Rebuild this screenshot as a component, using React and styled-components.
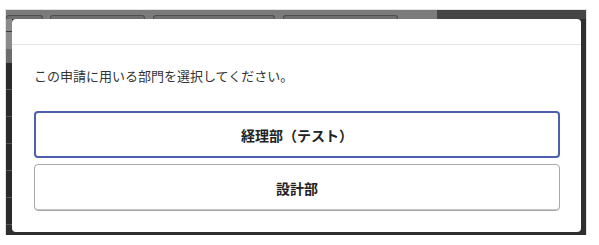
import React from 'react'
import styled, { createGlobalStyle } from 'styled-components'

const GlobalStyle = createGlobalStyle`
  html, body {
    margin: 0;
    padding: 0;
    background: #ffffff;
  }
  body {
    font-family: "Noto Sans CJK JP", "Noto Sans", sans-serif;
  }
`

const departments = [
  { id: 'acc', name: '経理部（テスト）', focused: true },
  { id: 'des', name: '設計部', focused: false },
]

const tabs = [
  { id: 1, width: 37, gap: 0 },
  { id: 2, width: 95, gap: 7 },
  { id: 3, width: 122, gap: 8 },
  { id: 4, width: 115, gap: 8 },
]

const App = () => {
  return (
    <>
      <GlobalStyle />
      <Frame>
        <PageBehind>
          <TopBar>
            <TabStrip>
              {tabs.map((t) => (
                <Tab key={t.id} $width={t.width} $gap={t.gap} />
              ))}
            </TabStrip>
            <TopBarRight />
          </TopBar>
          <PageBody>
            <SideStrip>
              <SideHead />
              {[0, 1, 2, 3, 4, 5].map((i) => (
                <SideRow key={i} />
              ))}
            </SideStrip>
          </PageBody>
        </PageBehind>

        <Modal>
          <ModalHeader />
          <ModalBody>
            <Prompt>この申請に用いる部門を選択してください。</Prompt>
            <ChoiceList>
              {departments.map((d) => (
                <ChoiceButton key={d.id} $focused={d.focused}>
                  {d.name}
                </ChoiceButton>
              ))}
            </ChoiceList>
          </ModalBody>
        </Modal>
      </Frame>
    </>
  )
}

export default App

const Frame = styled.div`
  position: relative;
  margin: 10px 0 0 6px;
  width: 580px;
  height: 225px;
  background: #2f2f2f;
  overflow: hidden;
  box-shadow: 0 0 0 1px #e2e2e2;
`

const PageBehind = styled.div`
  display: flex;
  flex-direction: column;
  height: 100%;
`

const TopBar = styled.div`
  display: flex;
  height: 9px;
`

const TabStrip = styled.div`
  flex: 1;
  display: flex;
  align-items: flex-end;
  background: #7b7b7b;
`

const Tab = styled.div`
  box-sizing: border-box;
  width: ${(p) => p.$width}px;
  margin-left: ${(p) => p.$gap}px;
  height: 4px;
  border: 1px solid #4e4e4e;
  border-bottom: none;
  border-radius: 3px 3px 0 0;
  background: #6f6f6f;
`

const TopBarRight = styled.div`
  width: 149px;
  background: #454545;
`

const PageBody = styled.div`
  flex: 1;
  display: flex;
`

const SideStrip = styled.div`
  width: 6px;
  display: flex;
  flex-direction: column;
`

const SideHead = styled.div`
  height: 44px;
  background: linear-gradient(#8a8a8a 0 12px, #3a3a3a 12px 13px, #8a8a8a 13px 30px, #6c6c6c 30px);
`

const SideRow = styled.div`
  height: 26px;
  border-bottom: 1px solid #555555;
  background: #2a2a2a;
`

const Modal = styled.div`
  position: absolute;
  left: 6px;
  top: 9px;
  width: 569px;
  height: 213px;
  background: #ffffff;
  border-radius: 4px;
  display: flex;
  flex-direction: column;
  box-sizing: border-box;
`

const ModalHeader = styled.div`
  height: 25px;
  border-bottom: 1px solid #e4e4e4;
`

const ModalBody = styled.div`
  flex: 1;
  padding: 21px 21px 0 22px;
  display: flex;
  flex-direction: column;
`

const Prompt = styled.p`
  margin: 0;
  font-size: 13px;
  line-height: 20px;
  color: #333333;
`

const ChoiceList = styled.div`
  margin-top: 25px;
  display: flex;
  flex-direction: column;
  gap: 6px;
`

const ChoiceButton = styled.button`
  height: 47px;
  box-sizing: border-box;
  width: 100%;
  background: #ffffff;
  border: ${(p) => (p.$focused ? '2px solid #4d5fae' : '1px solid #a9a9a9')};
  border-radius: 4px;
  box-shadow: ${(p) => (p.$focused ? 'none' : 'inset 0 -1px 0 #c4c4c4')};
  font-family: "Noto Sans CJK JP", "Noto Sans", sans-serif;
  font-size: 14px;
  font-weight: 700;
  color: #222222;
  cursor: pointer;
`
